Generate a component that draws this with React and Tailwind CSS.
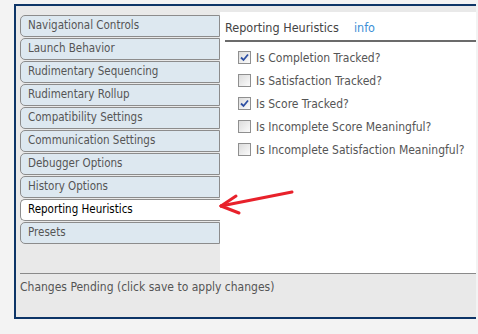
import React from "react";

const tabs = [
  "Navigational Controls",
  "Launch Behavior",
  "Rudimentary Sequencing",
  "Rudimentary Rollup",
  "Compatibility Settings",
  "Communication Settings",
  "Debugger Options",
  "History Options",
  "Reporting Heuristics",
  "Presets",
];

const options = [
  ["Is Completion Tracked?", true],
  ["Is Satisfaction Tracked?", false],
  ["Is Score Tracked?", true],
  ["Is Incomplete Score Meaningful?", false],
  ["Is Incomplete Satisfaction Meaningful?", false],
];

function Box({ checked }) {
  return (
    <span className="w-[13px] h-[13px] border border-[#8f8f8f] bg-gradient-to-br from-[#dcdcdc] to-[#fbfbfb] flex items-center justify-center shrink-0">
      {checked && (
        <svg width="9" height="9" viewBox="0 0 9 9">
          <path d="M1 4.5 L3.5 7 L8 1.5" fill="none" stroke="#2d4fa3" strokeWidth="1.8" />
        </svg>
      )}
    </span>
  );
}

export default function App() {
  const font = { fontFamily: '"DejaVu Sans Condensed", "DejaVu Sans", Verdana, sans-serif' };
  return (
    <div className="w-[478px] h-[334px] bg-[#f3f3f3] pl-[14px] pt-[4px] pr-[2px] relative" style={font}>
      <div className="w-[462px] h-[315px] border-l-2 border-t-2 border-b-2 border-[#0d3567] bg-[#e9e9e9] flex flex-col">
        <div className="flex pt-[6px] pl-[4px] h-[267px]">
          <div className="w-[200px] flex flex-col gap-[1px] pt-[3px]">
            {tabs.map((t, i) => {
              const active = t === "Reporting Heuristics";
              return (
                <div
                  key={i}
                  className={
                    "h-[22px] rounded-l-[5px] border border-[#8c8c8c] pl-[7px] flex items-center text-[11.5px] whitespace-nowrap " +
                    (active
                      ? "bg-white text-black border-r-white w-[201px]"
                      : "bg-[#dde8f0] text-[#555]")
                  }
                >
                  {t}
                </div>
              );
            })}
          </div>
          <div className="flex-1 bg-white pl-[5px]">
            <div className="h-[30px] border-b-2 border-[#6b6b6b] flex items-center gap-[15px] text-[12.5px] pt-[4px]">
              <span className="text-[#444]">Reporting Heuristics</span>
              <span className="text-[#3d8fd6]">info</span>
            </div>
            <div className="pl-[13px] pt-[4px] flex flex-col">
              {options.map(([label, c], i) => (
                <div key={i} className="h-[23px] flex items-center gap-[5px] text-[12px] text-[#555] whitespace-nowrap">
                  <Box checked={c} />
                  <span>{label}</span>
                </div>
              ))}
            </div>
          </div>
        </div>
        <div className="ml-[4px] border-t border-[#8a8a8a] pt-[4px] text-[12px] text-[#555] whitespace-nowrap">
          Changes Pending (click save to apply changes)
        </div>
      </div>
      <svg className="absolute left-0 top-0 pointer-events-none" width="478" height="334">
        <g stroke="#e8212b" strokeWidth="3" strokeLinecap="round" fill="none">
          <path d="M292 192 L221 206" />
          <path d="M221 206 L236 196" />
          <path d="M221 206 L239 213" />
        </g>
      </svg>
    </div>
  );
}
